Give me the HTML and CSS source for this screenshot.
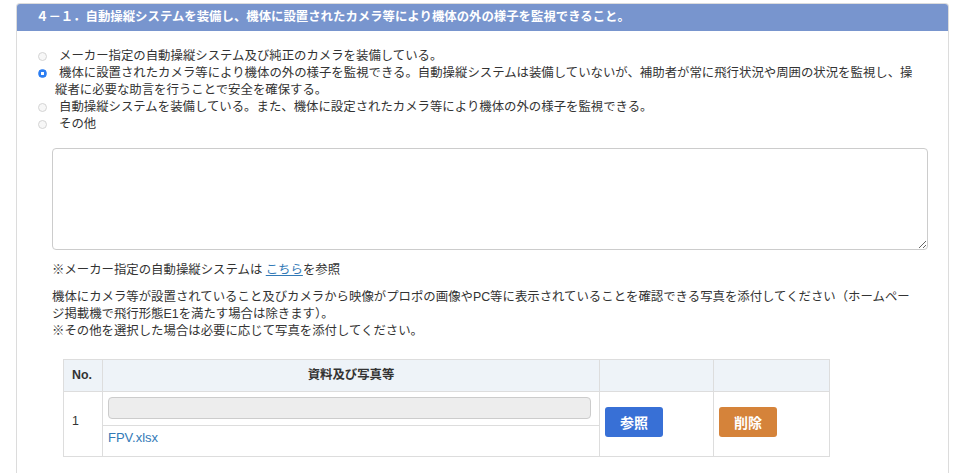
FILE: index.html
```html
<!DOCTYPE html>
<html lang="ja">
<head>
<meta charset="utf-8">
<title>4-1</title>
<link rel="stylesheet" href="styles.css">
</head>
<body>
<section class="panel">
  <h2 class="panel-title">４－１．自動操縦システムを装備し、機体に設置されたカメラ等により機体の外の様子を監視できること。</h2>
  <div class="panel-body">
    <div class="radio-list">
      <label class="radio-row"><input type="radio" name="q41">メーカー指定の自動操縦システム及び純正のカメラを装備している。</label>
      <label class="radio-row"><input type="radio" name="q41" checked>機体に設置されたカメラ等により機体の外の様子を監視できる。自動操縦システムは装備していないが、補助者が常に飛行状況や周囲の状況を監視し、操縦者に必要な助言を行うことで安全を確保する。</label>
      <label class="radio-row"><input type="radio" name="q41">自動操縦システムを装備している。また、機体に設定されたカメラ等により機体の外の様子を監視できる。</label>
      <label class="radio-row"><input type="radio" name="q41">その他</label>
    </div>
    <textarea class="other-text"></textarea>
    <p class="note">※メーカー指定の自動操縦システムは <a href="#" class="link">こちら</a>を参照</p>
    <p class="note note-wide">機体にカメラ等が設置されていること及びカメラから映像がプロポの画像やPC等に表示されていることを確認できる写真を添付してください（ホームペー<wbr>ジ掲載機で飛行形態E1を満たす場合は除きます）。<br>※その他を選択した場合は必要に応じて写真を添付してください。</p>
    <table class="files">
      <colgroup>
        <col class="c-no"><col class="c-file"><col class="c-btn"><col class="c-btn2">
      </colgroup>
      <thead>
        <tr><th class="th-no">No.</th><th class="th-file">資料及び写真等</th><th></th><th></th></tr>
      </thead>
      <tbody>
        <tr>
          <td class="td-no">1</td>
          <td class="td-file">
            <table class="inner">
              <tr><td class="inner-input"><div class="file-box"></div></td></tr>
              <tr><td class="inner-name"><a href="#" class="file-link">FPV.xlsx</a></td></tr>
            </table>
          </td>
          <td class="td-btn"><button class="btn btn-blue">参照</button></td>
          <td class="td-btn"><button class="btn btn-orange">削除</button></td>
        </tr>
      </tbody>
    </table>
  </div>
</section>
</body>
</html>
```
FILE: styles.css
```css
html, body {
  margin: 0;
  padding: 0;
  background: #fff;
  overflow: hidden;
}
body {
  font-family: "Liberation Sans", "Noto Sans CJK JP", sans-serif;
  font-size: 12.4px;
  line-height: 17px;
  color: #333;
}
.panel {
  margin: 3px 0 0 16px;
  width: 931px;
  border: 1px solid #dcdcdc;
  border-bottom: none;
  border-radius: 4px 4px 0 0;
  background: #fff;
}
.panel-title {
  margin: 0;
  height: 27px;
  line-height: 27px;
  padding-left: 19px;
  background: #7895ce;
  color: #fff;
  font-size: 12.4px;
  font-weight: bold;
  border-radius: 3px 3px 0 0;
}
.panel-body {
  padding: 17px 19px 16px 21px;
}
.radio-list {
  padding-right: 8px;
}
.radio-row {
  display: block;
  padding-left: 17px;
  text-indent: -17px;
}
.radio-row input {
  -webkit-appearance: none;
  appearance: none;
  box-sizing: border-box;
  width: 9px;
  height: 9px;
  margin: 0 12px 0 0;
  border: 1px solid #d4d4d4;
  border-radius: 50%;
  background: #f7f7f7;
  vertical-align: -1px;
}
.radio-row input:checked {
  border-color: #2c7ef2;
  background: radial-gradient(circle, #fff 0 1.4px, #2c7ef2 1.9px);
}
.other-text {
  display: block;
  box-sizing: border-box;
  width: 876px;
  height: 102px;
  margin: 15px 0 0 14px;
  border: 1px solid #cccccc;
  border-radius: 4px;
  resize: vertical;
  font: inherit;
}
.note {
  margin: 12px 0 0 14px;
  width: 866px;
}
.note-wide {
  margin-top: 10px;
  width: 858px;
}
.link {
  color: #337ab7;
  text-decoration: underline;
}
.files {
  margin: 19px 0 0 25px;
  width: 766px;
  border-collapse: collapse;
  table-layout: fixed;
}
.c-no { width: 39px; }
.c-file { width: 497px; }
.c-btn { width: 114px; }
.c-btn2 { width: 116px; }
.files th, .files > tbody > tr > td {
  border: 1px solid #dddddd;
}
.files th {
  background: #eef3f8;
  height: 32px;
  padding: 0 8px;
  font-weight: bold;
  box-sizing: border-box;
}
.th-no { text-align: left; }
.th-file { text-align: center; }
.td-no {
  padding: 0 8px 5px;
  vertical-align: middle;
}
.td-file {
  padding: 0;
}
.inner {
  width: 100%;
  border-collapse: collapse;
}
.inner-input {
  padding: 5px 8px 6px 5px;
  border-bottom: 1px solid #dddddd;
}
.file-box {
  height: 22px;
  box-sizing: border-box;
  background: #ededed;
  border: 1px solid #cccccc;
  border-radius: 4px;
}
.inner-name {
  padding: 3px 5px 9px 5px;
}
.file-link {
  color: #337ab7;
  text-decoration: none;
  font-size: 13px;
}
.td-btn {
  padding: 0 5px;
  vertical-align: middle;
}
.btn {
  display: block;
  width: 58px;
  height: 30px;
  padding: 0;
  margin-top: -5px;
  border: none;
  border-radius: 3px;
  color: #fff;
  font-family: "Noto Sans CJK JP", sans-serif;
  font-size: 14px;
  font-weight: bold;
  line-height: 30px;
  text-align: center;
}
.btn-blue { background: #3870d6; }
.btn-orange { background: #d5833a; }
```
